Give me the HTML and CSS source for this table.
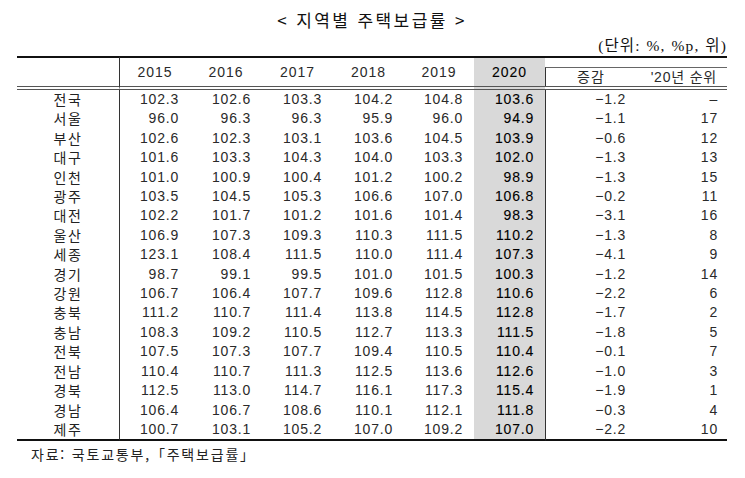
FILE: index.html
```html
<!DOCTYPE html>
<html lang="ko">
<head>
<meta charset="utf-8">
<title>지역별 주택보급률</title>
<link rel="stylesheet" href="styles.css">
</head>
<body>
<div class="page">
  <h1 class="title">&lt; 지역별 주택보급률 &gt;</h1>
  <div class="unit">(단위: %, %p, 위)</div>
  <table class="tbl">
    <colgroup>
      <col class="c-label"><col class="c-y15"><col class="c-y16"><col class="c-y"><col class="c-y"><col class="c-y19"><col class="c-y"><col class="c-sub"><col class="c-sub">
    </colgroup>
    <thead>
      <tr>
        <th class="corner"></th>
        <th class="yr">2015</th>
        <th class="yr">2016</th>
        <th class="yr">2017</th>
        <th class="yr">2018</th>
        <th class="yr">2019</th>
        <th class="yr hl">2020</th>
        <th class="sub"><div class="subin chg">증감</div></th>
        <th class="sub"><div class="subin rank">'20년 순위</div></th>
      </tr>
    </thead>
    <tbody>
      <tr><td class="lb">전국</td><td>102.3</td><td>102.6</td><td>103.3</td><td>104.2</td><td>104.8</td><td class="hl">103.6</td><td class="dif">−1.2</td><td class="rk">–</td></tr>
      <tr><td class="lb">서울</td><td>96.0</td><td>96.3</td><td>96.3</td><td>95.9</td><td>96.0</td><td class="hl">94.9</td><td class="dif">−1.1</td><td class="rk">17</td></tr>
      <tr><td class="lb">부산</td><td>102.6</td><td>102.3</td><td>103.1</td><td>103.6</td><td>104.5</td><td class="hl">103.9</td><td class="dif">−0.6</td><td class="rk">12</td></tr>
      <tr><td class="lb">대구</td><td>101.6</td><td>103.3</td><td>104.3</td><td>104.0</td><td>103.3</td><td class="hl">102.0</td><td class="dif">−1.3</td><td class="rk">13</td></tr>
      <tr><td class="lb">인천</td><td>101.0</td><td>100.9</td><td>100.4</td><td>101.2</td><td>100.2</td><td class="hl">98.9</td><td class="dif">−1.3</td><td class="rk">15</td></tr>
      <tr><td class="lb">광주</td><td>103.5</td><td>104.5</td><td>105.3</td><td>106.6</td><td>107.0</td><td class="hl">106.8</td><td class="dif">−0.2</td><td class="rk">11</td></tr>
      <tr><td class="lb">대전</td><td>102.2</td><td>101.7</td><td>101.2</td><td>101.6</td><td>101.4</td><td class="hl">98.3</td><td class="dif">−3.1</td><td class="rk">16</td></tr>
      <tr><td class="lb">울산</td><td>106.9</td><td>107.3</td><td>109.3</td><td>110.3</td><td>111.5</td><td class="hl">110.2</td><td class="dif">−1.3</td><td class="rk">8</td></tr>
      <tr><td class="lb">세종</td><td>123.1</td><td>108.4</td><td>111.5</td><td>110.0</td><td>111.4</td><td class="hl">107.3</td><td class="dif">−4.1</td><td class="rk">9</td></tr>
      <tr><td class="lb">경기</td><td>98.7</td><td>99.1</td><td>99.5</td><td>101.0</td><td>101.5</td><td class="hl">100.3</td><td class="dif">−1.2</td><td class="rk">14</td></tr>
      <tr><td class="lb">강원</td><td>106.7</td><td>106.4</td><td>107.7</td><td>109.6</td><td>112.8</td><td class="hl">110.6</td><td class="dif">−2.2</td><td class="rk">6</td></tr>
      <tr><td class="lb">충북</td><td>111.2</td><td>110.7</td><td>111.4</td><td>113.8</td><td>114.5</td><td class="hl">112.8</td><td class="dif">−1.7</td><td class="rk">2</td></tr>
      <tr><td class="lb">충남</td><td>108.3</td><td>109.2</td><td>110.5</td><td>112.7</td><td>113.3</td><td class="hl">111.5</td><td class="dif">−1.8</td><td class="rk">5</td></tr>
      <tr><td class="lb">전북</td><td>107.5</td><td>107.3</td><td>107.7</td><td>109.4</td><td>110.5</td><td class="hl">110.4</td><td class="dif">−0.1</td><td class="rk">7</td></tr>
      <tr><td class="lb">전남</td><td>110.4</td><td>110.7</td><td>111.3</td><td>112.5</td><td>113.6</td><td class="hl">112.6</td><td class="dif">−1.0</td><td class="rk">3</td></tr>
      <tr><td class="lb">경북</td><td>112.5</td><td>113.0</td><td>114.7</td><td>116.1</td><td>117.3</td><td class="hl">115.4</td><td class="dif">−1.9</td><td class="rk">1</td></tr>
      <tr><td class="lb">경남</td><td>106.4</td><td>106.7</td><td>108.6</td><td>110.1</td><td>112.1</td><td class="hl">111.8</td><td class="dif">−0.3</td><td class="rk">4</td></tr>
      <tr class="last"><td class="lb">제주</td><td>100.7</td><td>103.1</td><td>105.2</td><td>107.0</td><td>109.2</td><td class="hl">107.0</td><td class="dif">−2.2</td><td class="rk">10</td></tr>
    </tbody>
  </table>
  <p class="source">자료: 국토교통부,「주택보급률」</p>
</div>
</body>
</html>
```

FILE: styles.css
```css
html, body {
  margin: 0;
  padding: 0;
  background: #ffffff;
}

body {
  font-family: "Liberation Sans", "Noto Sans CJK KR", sans-serif;
  color: #2a2a2a;
}

.page {
  width: 710px;
  padding-left: 17px;
}

.title {
  margin: 0;
  padding-top: 8px;
  height: 24px;
  line-height: 24px;
  font-family: "Noto Sans CJK KR", sans-serif;
  font-size: 17px;
  font-weight: normal;
  letter-spacing: 2.4px;
  text-align: center;
  color: #111;
}

.unit {
  margin-top: 4px;
  height: 20px;
  line-height: 20px;
  text-align: right;
  font-family: "Liberation Serif", "Noto Sans CJK KR", serif;
  font-size: 15.5px;
  letter-spacing: 1.1px;
  word-spacing: 1px;
  color: #111;
}

.tbl {
  width: 710px;
  border-collapse: separate;
  border-spacing: 0;
  table-layout: fixed;
  font-size: 14px;
  letter-spacing: 0.8px;
}

.c-label { width: 103px; }
.c-y15 { width: 70px; }
.c-y16 { width: 72px; }
.c-y { width: 71px; }
.c-y19 { width: 70px; }
.c-sub { width: 91px; }

.tbl th {
  padding: 0;
  font-weight: normal;
  border-top: 2px solid #111;
  border-bottom: 4px double #555;
  line-height: 28px;
  vertical-align: top;
}

.tbl th.corner {
  border-right: 1px solid #333;
}

.tbl th.yr {
  text-align: center;
  padding-top: 1px;
  line-height: 27px;
  letter-spacing: 1px;
}

.tbl th.sub {
  padding-top: 9px;
  line-height: 18px;
}

.subin {
  border-top: 1px solid #666;
  height: 18px;
  line-height: 19px;
  font-family: "Liberation Sans", "Noto Sans CJK KR", sans-serif;
}

.subin.chg {
  border-left: 1px solid #333;
  text-align: center;
  letter-spacing: 1px;
}

.subin.rank {
  text-align: right;
  padding-right: 10px;
}

.tbl td {
  padding: 0 11px 0 0;
  text-align: right;
  line-height: 19.4px;
  white-space: nowrap;
}

.tbl td.lb {
  padding: 0;
  text-align: center;
  font-family: "Noto Sans CJK KR", sans-serif;
  letter-spacing: 1.5px;
  border-right: 1px solid #333;
  color: #222;
}

.tbl .hl {
  background: #d9d9d9;
  color: #000;
  -webkit-text-stroke: 0.1px #000;
}

.tbl td.dif {
  border-left: 1px solid #333;
  padding-right: 10px;
}

.tbl td.rk {
  padding-right: 9px;
}

.tbl tr.last td {
  border-bottom: 2px solid #111;
}

.source {
  margin: 3px 0 0 0;
  padding-left: 14px;
  line-height: 20px;
  font-family: "Noto Sans CJK KR", sans-serif;
  font-size: 14px;
  letter-spacing: 1.8px;
  color: #222;
}
```
